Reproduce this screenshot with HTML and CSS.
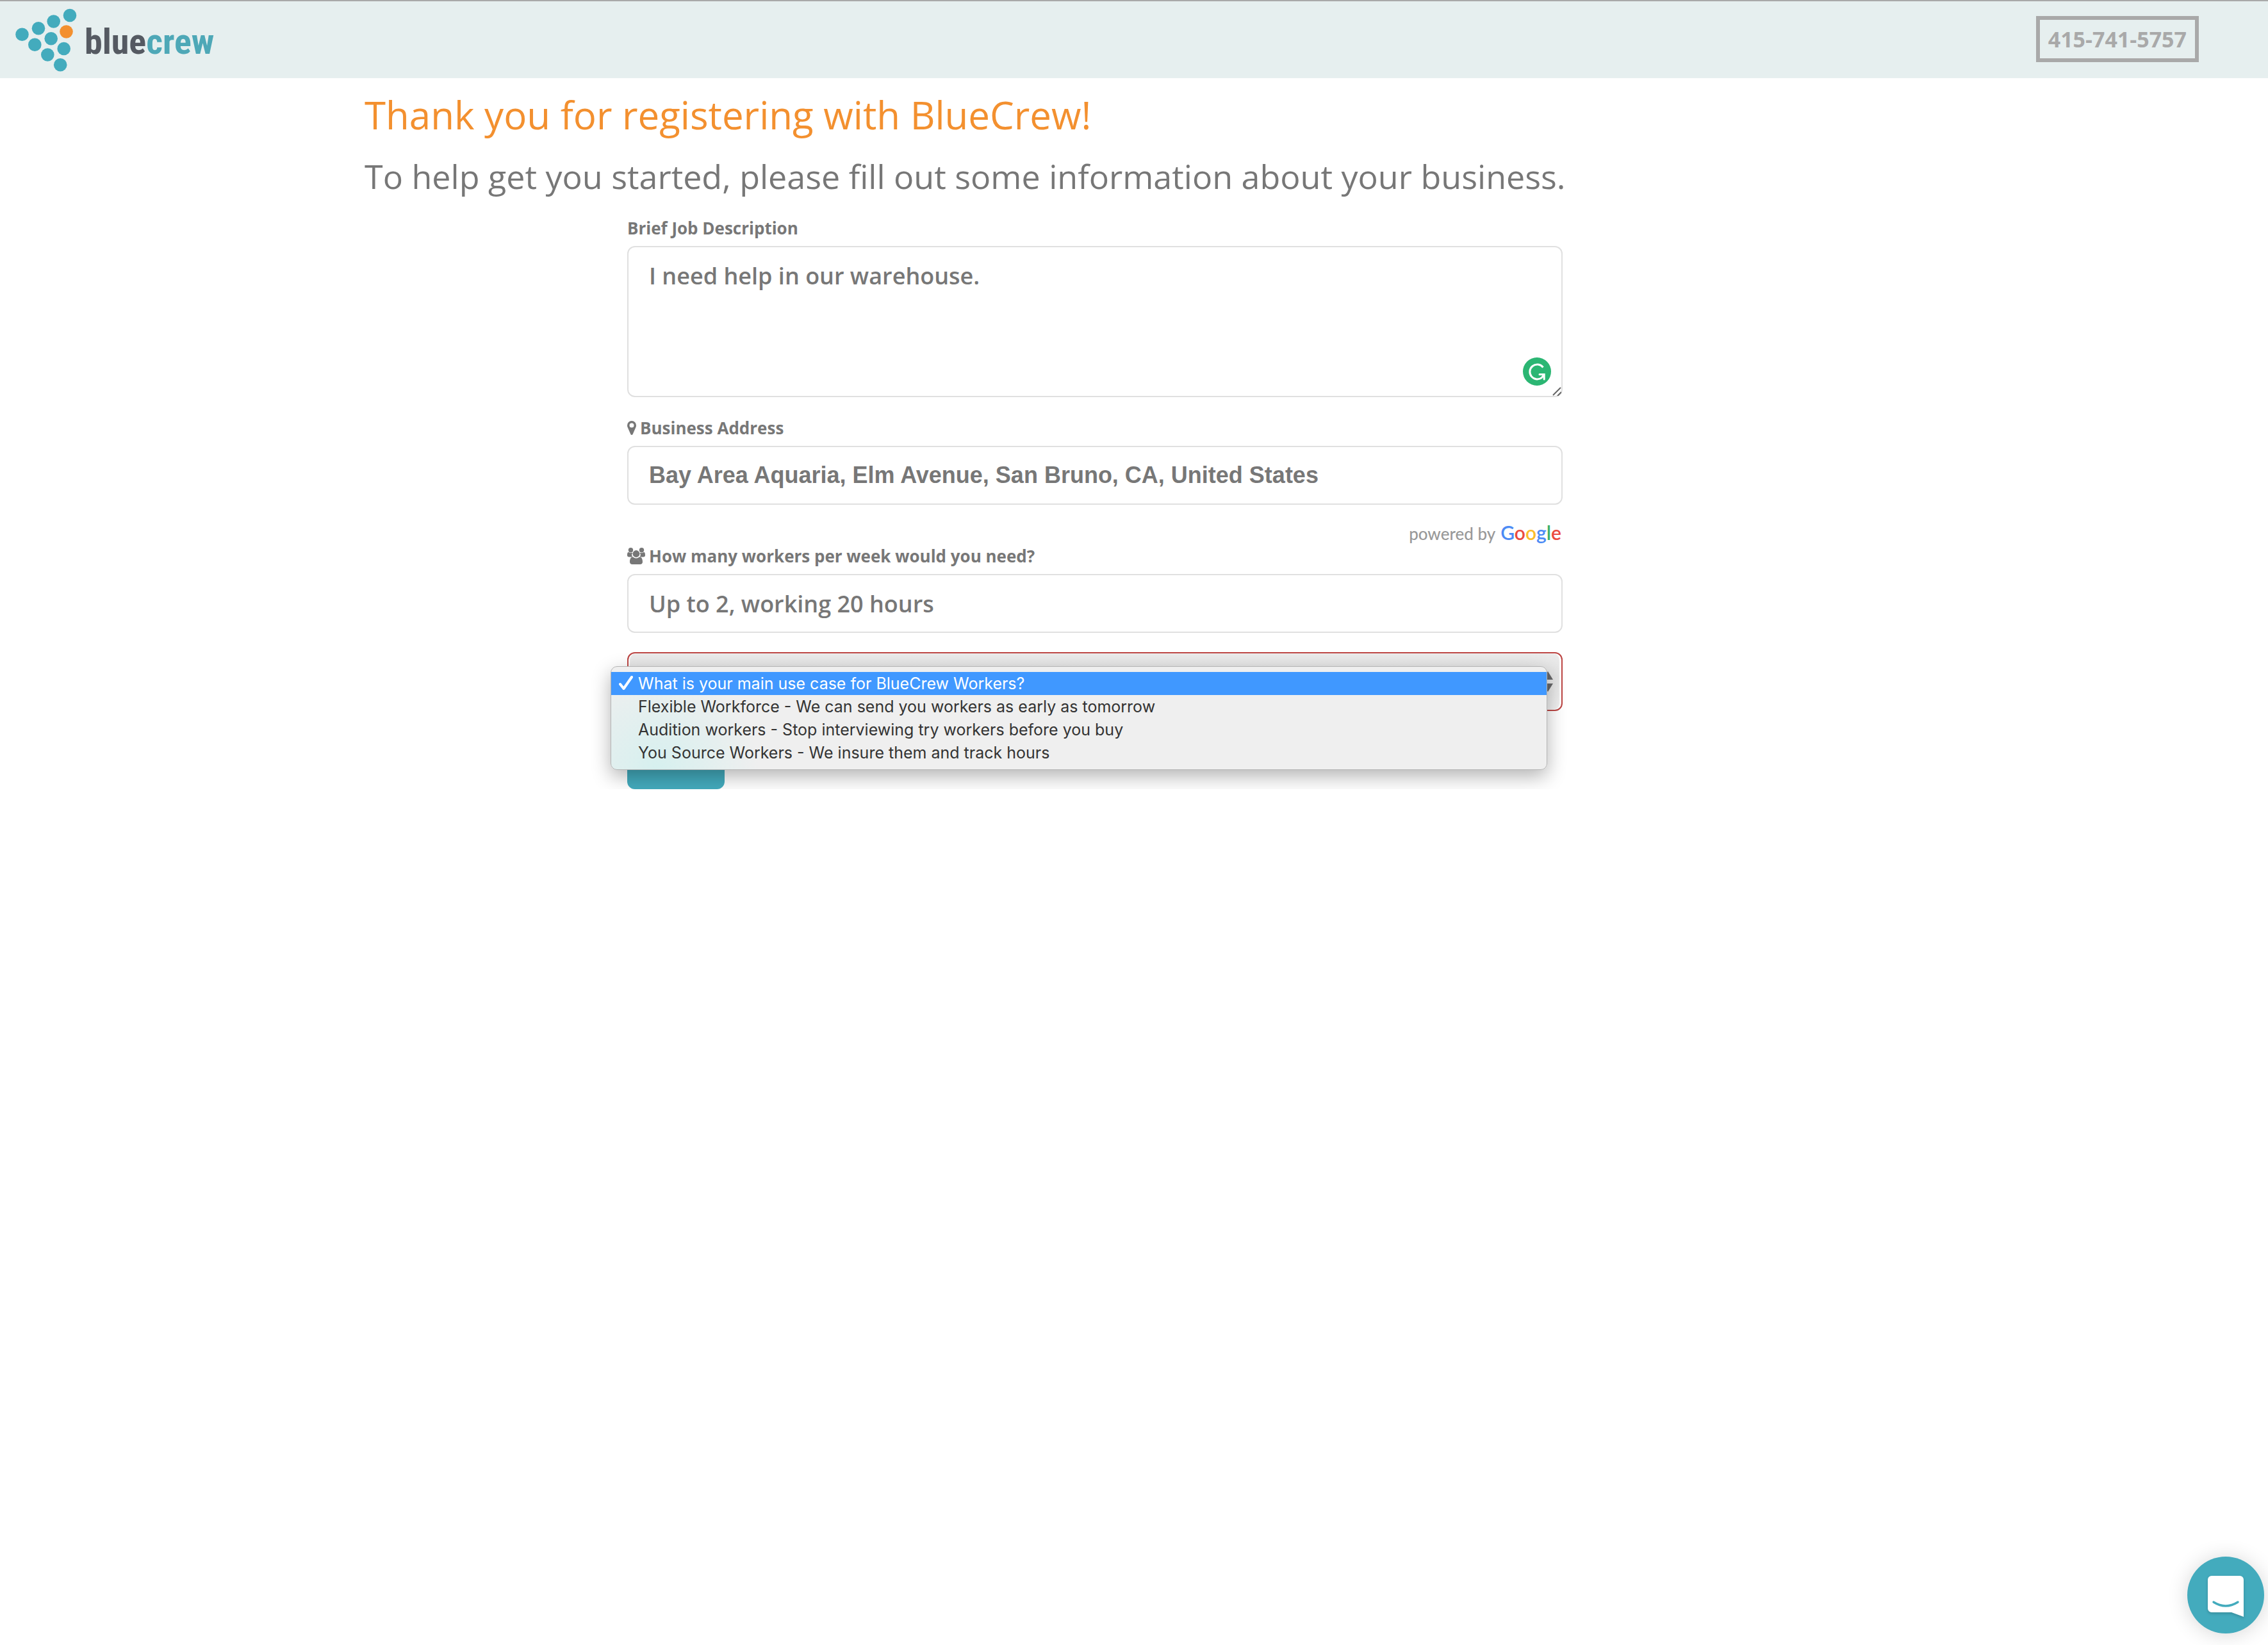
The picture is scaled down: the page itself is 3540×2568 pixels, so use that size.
FILE: index.html
```html
<!DOCTYPE html>
<html lang="en">
<head>
<meta charset="utf-8">
<meta name="viewport" content="width=device-width, initial-scale=1">
<title>BlueCrew – Registration</title>
<link rel="stylesheet" href="styles.css">
</head>
<body>
<header class="topbar">
  <a class="brand" href="#">
    <svg class="brand-mark" viewBox="0 -1 98 102" aria-hidden="true">
      <g fill="#43abbd">
        <circle cx="87" cy="13" r="10.3"/><circle cx="61.7" cy="22.5" r="10.3"/>
        <circle cx="38" cy="33.2" r="10.3"/><circle cx="57.7" cy="49.2" r="10.3"/>
        <circle cx="12.5" cy="42.7" r="10.3"/><circle cx="32.3" cy="58.7" r="10.3"/>
        <circle cx="77.7" cy="65" r="10.3"/><circle cx="52.3" cy="74.5" r="10.3"/>
        <circle cx="72.2" cy="90.3" r="10.3"/>
      </g>
      <circle cx="81.5" cy="38.5" r="10.3" fill="#f3902f"/>
    </svg>
    <span class="brand-name">blue<span class="brand-accent">crew</span></span>
  </a>
  <a class="phone" href="tel:415-741-5757">415-741-5757</a>
</header>

<main class="page">
  <h1 class="title">Thank you for registering with BlueCrew!</h1>
  <p class="subtitle">To help get you started, please fill out some information about your business.</p>

  <form class="form">
    <div class="field">
      <label class="label" for="job">Brief Job Description</label>
      <div class="control">
        <textarea class="input input-area" id="job">I need help in our warehouse.</textarea>
        <svg class="checker" viewBox="0 0 44 44" aria-hidden="true">
          <circle cx="22" cy="22" r="22" fill="#2bb673"/>
          <path d="M31.500 15.500A11.500 11.500 0 1 0 30 31L33 27" fill="none" stroke="#fff" stroke-width="3"/>
          <path d="M26 26.500H33.200V34" fill="none" stroke="#fff" stroke-width="3" stroke-linecap="round"/>
        </svg>
        <svg class="grip" viewBox="0 0 14 14" aria-hidden="true">
          <path d="M1 13L13 1M8 14L14 8" stroke="#666" stroke-width="2"/>
        </svg>
      </div>
    </div>

    <div class="field">
      <label class="label" for="address">
        <svg class="icon-pin" viewBox="0 0 14 22" aria-hidden="true">
          <path fill="currentColor" fill-rule="evenodd" d="M7 0a7 7 0 0 1 7 7c0 1.300-.2 2.300-.6 3.100L8.600 21c-.3.600-.9 1-1.600 1s-1.300-.4-1.600-1L.6 10.100C.2 9.300 0 8.300 0 7a7 7 0 0 1 7-7zm0 3.500a3.500 3.500 0 1 0 0 7 3.500 3.500 0 0 0 0-7z"/>
        </svg>
        Business Address
      </label>
      <input class="input input-address" id="address" type="text" value="Bay Area Aquaria, Elm Avenue, San Bruno, CA, United States">
    </div>

    <p class="powered">powered by <span class="google"><span class="g-blue">G</span><span class="g-red">o</span><span class="g-yellow">o</span><span class="g-blue">g</span><span class="g-green">l</span><span class="g-red">e</span></span></p>

    <div class="field">
      <label class="label" for="workers">
        <svg class="icon-users" viewBox="0 0 28 26" aria-hidden="true">
          <g fill="currentColor">
            <circle cx="5.500" cy="3.700" r="3.700"/><circle cx="22.500" cy="3.700" r="3.700"/>
            <path d="M8.500 8.500C6.500 9.500 7 13 8.500 14.500H3C1 14.500 0 13.500 0 12c0-2.500.3-5 2-5 1 0 1.500 1.200 3.500 1.200 1.200 0 2-.4 3 .3zM19.500 8.500c2 1 1.500 4.500 0 6H25c2 0 3-1 3-2.500 0-2.500-.3-5-2-5-1 0-1.500 1.200-3.500 1.200-1.200 0-2-.4-3 .3z"/>
            <circle cx="14" cy="9.500" r="5.400"/>
            <path d="M8.500 14.500c1.200 0 2.500 2 5.500 2s4.300-2 5.500-2c3.500 0 4.500 4.500 4.500 7.500 0 2.500-1.500 4-4 4H8c-2.500 0-4-1.500-4-4 0-3 1-7.500 4.500-7.500z"/>
          </g>
        </svg>
        How many workers per week would you need?
      </label>
      <input class="input" id="workers" type="text" value="Up to 2, working 20 hours">
    </div>

    <div class="field control">
      <select class="select" aria-label="Main use case">
        <option>What is your main use case for BlueCrew Workers?</option>
      </select>
      <svg class="arrows" viewBox="0 0 16 32" aria-hidden="true">
        <path d="M8 0l8 13H0zM0 19h16L8 32z" fill="#68686a"/>
      </svg>
      <ul class="menu" role="listbox" aria-label="Main use case">
        <li class="menu-item menu-item-active" role="option" aria-selected="true">
          <svg class="tick" viewBox="0 0 22 22" aria-hidden="true"><path d="M2 13l5.500 7L20 2" fill="none" stroke="#fff" stroke-width="4" stroke-linecap="round" stroke-linejoin="round"/></svg>
          What is your main use case for BlueCrew Workers?
        </li>
        <li class="menu-item" role="option">Flexible Workforce - We can send you workers as early as tomorrow</li>
        <li class="menu-item" role="option">Audition workers - Stop interviewing try workers before you buy</li>
        <li class="menu-item" role="option">You Source Workers - We insure them and track hours</li>
      </ul>
    </div>

    <button class="submit" type="button" aria-label="Next"></button>
  </form>
</main>

<button class="chat" type="button" aria-label="Open chat">
  <svg class="chat-icon" viewBox="0 0 56 64" aria-hidden="true">
    <path d="M6 0H50a6 6 0 0 1 6 6V64L37 57H6a6 6 0 0 1-6-6V6a6 6 0 0 1 6-6z" fill="#fff"/>
    <path d="M9 41Q28 53 47 41" fill="none" stroke="#43abbd" stroke-width="3.400" stroke-linecap="round"/>
  </svg>
</button>
</body>
</html>
```
FILE: styles.css
```css
* { box-sizing: border-box; }

body {
  margin: 0;
  background: #fff;
  color: #777;
  font-family: "Open Sans", sans-serif;
}

.topbar {
  display: flex;
  align-items: center;
  justify-content: space-between;
  height: 122px;
  padding: 0 108px 2px 22px;
  border-top: 2px solid #a9a9a9;
  background: #e6efef;
}

.brand {
  display: flex;
  align-items: center;
  gap: 12px;
  text-decoration: none;
}

.brand-mark { width: 98px; height: 102px; }

.brand-name {
  padding-top: 8px;
  color: #555a62;
  font: bold 56px/64px "Roboto Condensed", Roboto, sans-serif;
}

.brand-accent { color: #4ea8b7; }

.phone {
  padding: 6px 13px;
  border: 6px solid #a9a9a9;
  color: #a9a9a9;
  font-size: 34px;
  font-weight: 700;
  line-height: 48px;
  text-decoration: none;
}

.page {
  max-width: 2402px;
  margin: 0 auto;
  padding-top: 24px;
}

.title {
  margin: 0;
  color: #f3902f;
  font-size: 60px;
  font-weight: 400;
  line-height: 66px;
}

.subtitle {
  margin: 34px 0;
  font-size: 52px;
  line-height: 58px;
}

.form {
  display: flex;
  flex-direction: column;
  align-items: stretch;
  gap: 30px;
  max-width: 1870px;
  padding-left: 410px;
}

.field {
  display: flex;
  flex-direction: column;
  gap: 10px;
}

.label {
  display: flex;
  align-items: center;
  gap: 6px;
  font-size: 26px;
  font-weight: 700;
  line-height: 36px;
}

.icon-pin { width: 14px; height: 22px; }
.icon-users { width: 28px; height: 26px; }

.control { position: relative; }

.input {
  display: block;
  width: 100%;
  height: 92px;
  padding: 0 32px;
  border: 2px solid #e0e0e0;
  border-radius: 12px;
  background: #fff;
  color: #777;
  font: 600 36px/52px "Open Sans", sans-serif;
}

.input-area {
  height: 236px;
  padding: 19px 32px;
  resize: none;
}

.input-address {
  font-family: "Liberation Sans", sans-serif;
  font-weight: 700;
}

.checker {
  position: absolute;
  right: 18px;
  bottom: 18px;
  width: 44px;
  height: 44px;
}

.grip {
  position: absolute;
  right: 2px;
  bottom: 2px;
  width: 14px;
  height: 14px;
}

.powered {
  display: flex;
  justify-content: flex-end;
  align-items: baseline;
  gap: 8px;
  height: 32px;
  margin: 0 2px 0 0;
  color: #999;
  font: 500 26px/26px Lato, sans-serif;
}

.powered + .field { margin-top: -30px; }

.google { font-size: 30px; font-weight: 600; }
.g-blue { color: #4c8bf5; }
.g-red { color: #ea4b40; }
.g-yellow { color: #fbbc2c; }
.g-green { color: #3bb167; }

.select {
  appearance: none;
  width: 100%;
  height: 92px;
  padding: 0 32px;
  border: 2px solid #bd4644;
  border-radius: 12px;
  background: linear-gradient(#ebebeb, #e4e4e4 40%, #f2f2f2);
  box-shadow: inset -3px 0 1px #fff, inset 2px 0 1px #fff;
  color: #777;
  font: 600 26px/36px "Open Sans", sans-serif;
}

.arrows {
  position: absolute;
  right: 15px;
  top: 30px;
  width: 16px;
  height: 32px;
}

.menu {
  position: absolute;
  top: 22px;
  left: -26px;
  width: calc(100% + 2px);
  margin: 0;
  padding: 8px 0;
  border: 1px solid #b4b4b4;
  border-radius: 10px;
  background: radial-gradient(circle at 70px 160px, #d6f0ef, #efefef 160px);
  box-shadow: 0 10px 30px rgba(0, 0, 0, 0.3);
  color: #333;
  font: 25px/36px Inter, sans-serif;
  list-style: none;
}

.menu-item {
  position: relative;
  padding-left: 42px;
}

.menu-item-active {
  background: #4098ff;
  color: #fff;
}

.tick {
  position: absolute;
  left: 12px;
  top: 6px;
  width: 22px;
  height: 22px;
}

.submit {
  width: 152px;
  height: 92px;
  border: 0;
  border-radius: 12px;
  background: #43abbd;
}

.chat {
  position: fixed;
  right: 6px;
  bottom: 18px;
  display: flex;
  align-items: center;
  justify-content: center;
  width: 120px;
  height: 120px;
  padding: 4px 0 0;
  border: 0;
  border-radius: 50%;
  background: #43abbd;
  box-shadow: 0 2px 32px rgba(0, 0, 0, 0.16);
}

.chat-icon {
  width: 56px;
  height: 64px;
  filter: drop-shadow(0 2px 2px rgba(0, 0, 0, 0.18));
}
```
